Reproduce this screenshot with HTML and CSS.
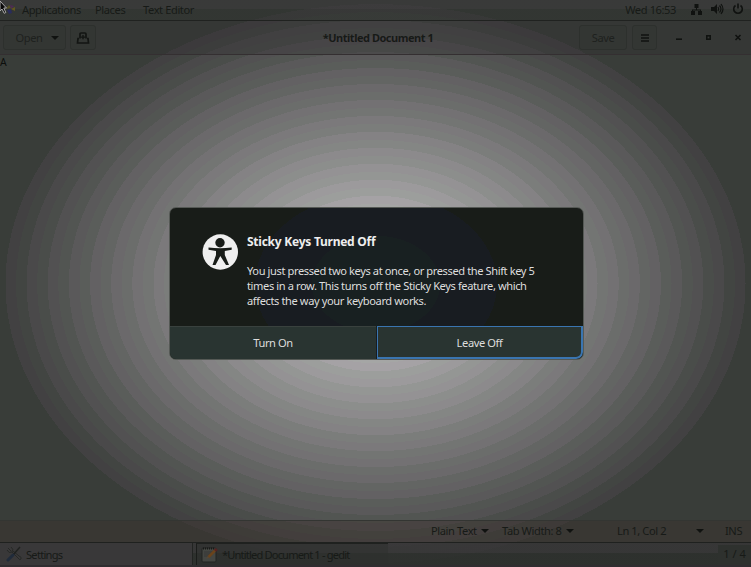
FILE: index.html
```html
<!DOCTYPE html>
<html lang="en">
<head>
<meta charset="utf-8">
<title>gedit</title>
<link rel="stylesheet" href="styles.css">
</head>
<body>
<div class="desktop">
  <header class="panel">
    <svg class="distro" width="10" height="10" viewBox="0 0 10 10"><path d="M0 5l3-4 2 3z" fill="#595424"/><path d="M4 1l4 1-3 3z" fill="#4f2b53"/><path d="M9 3v4L5 5z" fill="#61571f"/><path d="M1 6l4-1 1 4-3 1z" fill="#292c5c"/></svg>
    <span class="t apps">Applications</span>
    <span class="t places">Places</span>
    <span class="t editor">Text Editor</span>
    <span class="t clock">Wed 16:53</span>
    <svg class="tray" width="54" height="14" viewBox="0 0 54 14">
      <g fill="#101210"><rect x="4.500" y="2" width="4" height="4"/><rect x="1" y="9" width="4" height="4"/><rect x="8" y="9" width="4" height="4"/><path d="M6 5h1v2.500h4V10h-1V8.500H3V10H2V7.500h4z"/></g>
      <path d="M21 5h3l3-3v10l-3-3h-3z" fill="#101210"/>
      <path d="M28 5q1.500 2 0 4M29.500 3.500q3 3.500 0 7M31 2q4 5 0 10" fill="none" stroke="#101210" stroke-width="1.200"/>
      <path d="M45.500 3.500a4.300 4.300 0 1 0 5 0M48 1.500v5" fill="none" stroke="#101210" stroke-width="1.600"/>
    </svg>
  </header>
  <div class="titlebar">
    <div class="btn open"><span class="t">Open</span><i class="caret"></i></div>
    <div class="btn new"><svg width="14" height="12" viewBox="0 0 14 12"><path d="M4 6.500V2q0-1 1-1h4q1 0 1 1v4.500M3 6.500H2L1.500 11h11L12 6.500h-1" fill="none" stroke="#131513" stroke-width="1.700"/><path d="M6.300 3h1.400v1.400h1.400v1.400H7.700v1.500H6.300V5.800H4.900V4.400h1.400z" fill="#131513"/></svg></div>
    <div class="t title">*Untitled Document 1</div>
    <div class="btn save"><span class="t">Save</span></div>
    <div class="btn menu"><svg width="8" height="8" viewBox="0 0 8 8"><path d="M0 1h8M0 4h8M0 7h8" stroke="#101210" stroke-width="1.300"/></svg></div>
    <svg class="wm" width="70" height="8" viewBox="0 0 70 8"><path d="M1 5.200h6" stroke="#101210" stroke-width="1.600"/><rect x="31.800" y="1.800" width="3.400" height="3.400" fill="none" stroke="#101210" stroke-width="1.600"/><path d="M60.500 1l5 5M65.500 1l-5 5" stroke="#101210" stroke-width="1.600"/></svg>
  </div>
  <main class="text"><span class="t">A</span></main>
  <div class="status">
    <span class="t plain">Plain Text</span><i class="caret c1"></i>
    <span class="t tab">Tab Width: 8</span><i class="caret c2"></i>
    <span class="t pos">Ln 1, Col 2</span><i class="caret c3"></i>
    <span class="t ins">INS</span>
  </div>
  <footer class="tasks">
    <div class="task first">
      <svg width="16" height="16" viewBox="0 0 16 16"><path d="M2 2l3 3M5 1q3 2 1 5M1 4q2 4 5 2l6 6q2 3 3 1t-2-3L7 5" fill="none" stroke="#262826" stroke-width="1"/><path d="M14 1L7 9" stroke="#202220" stroke-width="1.500"/><path d="M7 9l-5 5" stroke="#202b3a" stroke-width="3" stroke-linecap="round"/></svg>
      <span class="t">Settings</span>
    </div>
    <div class="task active">
      <svg width="17" height="17" viewBox="0 0 17 17"><rect x="1" y="2" width="14" height="14" rx="1" fill="#444642" stroke="#232523"/><path d="M2 2.500h12" stroke="#171917" stroke-width="2" stroke-dasharray="1 1"/><path d="M3 6h9M3 8h7M3 10h5" stroke="#303230" stroke-width=".7"/><path d="M14 4.500l-6.500 6.500" stroke="#6b431b" stroke-width="2.500"/><path d="M15.800 3l-1.800 1.800" stroke="#572321" stroke-width="3"/><path d="M6.500 10l1.800 1.800-3 1.200z" fill="#544838"/></svg>
      <span class="t">*Untitled Document 1 - gedit</span>
    </div>
    <div class="pager"><span class="t">1 / 4</span></div>
  </footer>

  <section class="dialog">
    <div class="body">
      <svg class="icon" width="36" height="36" viewBox="0 0 36 36"><circle cx="18.300" cy="18" r="17.700" fill="#efefef"/><circle cx="18" cy="8.700" r="4.700" fill="#181c18"/><path d="M6.500 13.600Q18 15 29.700 13.600V15.700L22.800 17V21L27 31H24L18.300 22 13.500 31H10.500L14 21V17L6.500 15.700z" fill="#181c18"/></svg>
      <div class="copy">
        <h1 class="t">Sticky Keys Turned Off</h1>
        <div class="message">
          <div class="t">You just pressed two keys at once, or pressed the Shift key 5</div>
          <div class="t">times in a row. This turns off the Sticky Keys feature, which</div>
          <div class="t">affects the way your keyboard works.</div>
        </div>
      </div>
    </div>
    <div class="actions"><div class="act"><span class="t">Turn On</span></div><div class="act focus"><span class="t">Leave Off</span></div></div>
  </section>
  <svg class="pointer" width="8" height="14" viewBox="0 0 8 14"><path d="M0 0l6.500 7H3.800l2 4.500-1.600.8L2 8 0 10z" fill="#080808" stroke="#aaa" stroke-width="1"/></svg>
</div>
</body>
</html>
```
FILE: styles.css
```css
* { box-sizing: border-box; }
body { margin: 0; font-family: "Noto Sans", sans-serif; font-size: 11.100px; letter-spacing: -.4px; color: #171a17; }
.t { white-space: nowrap; }
svg { display: block; flex: none; }

.desktop {
  position: relative; width: 751px; height: 567px; overflow: hidden;
  display: flex; flex-direction: column;
  --s: calc(100% / 35);
  background: radial-gradient(ellipse 370px 279.300px at 375.500px 283.500px,
    #a5a6a5 0 calc(var(--s) * 10), #a5a2a5 0 calc(var(--s) * 11),
    #9c9e9c 0 calc(var(--s) * 12), #9c9a9c 0 calc(var(--s) * 13),
    #949694 0 calc(var(--s) * 14), #949294 0 calc(var(--s) * 15),
    #8c8e8c 0 calc(var(--s) * 16), #8c8a8c 0 calc(var(--s) * 17),
    #848684 0 calc(var(--s) * 18), #848284 0 calc(var(--s) * 19),
    #7b7d7b 0 calc(var(--s) * 20), #7b797b 0 calc(var(--s) * 21),
    #737573 0 calc(var(--s) * 22), #737173 0 calc(var(--s) * 23),
    #6b6d6b 0 calc(var(--s) * 24), #6b696b 0 calc(var(--s) * 25),
    #636563 0 calc(var(--s) * 26), #636163 0 calc(var(--s) * 27),
    #5a5d5a 0 calc(var(--s) * 28), #5a595a 0 calc(var(--s) * 29),
    #525552 0 calc(var(--s) * 30), #525152 0 calc(var(--s) * 31),
    #4a4d4a 0 calc(var(--s) * 32), #4a494a 0 calc(var(--s) * 33),
    #424542 0 calc(var(--s) * 34), #424142 0 100%, #393d39 0);
}

.panel { height: 21px; display: flex; align-items: center; padding: 0 7px 2px 6px; border-bottom: 1px solid #202220; background: linear-gradient(#393839a0 9px, #2a2d2a70 9px); }
.apps { margin-left: 6px; width: 73px; }
.places { width: 48px; }
.clock { margin-left: auto; margin-right: 14px; }

.titlebar { height: 34px; display: flex; align-items: center; padding: 0 6px 0 3px; background: #2d2a2d4d; border-bottom: 1px solid #342f31; }
.btn { height: 25px; border: 1px solid #2d302d; border-radius: 3px; background: #333633b0; display: flex; align-items: center; justify-content: center; color: #1e211e; }
.btn .t { margin-top: -1px; }
.open { width: 63px; gap: 8px; padding-left: 5px; letter-spacing: -.4px; }
.new { width: 26px; margin-left: 4px; }
.title { flex: 1; text-align: center; font-weight: 700; padding: 0 0 1px 81px; font-size: 11px; letter-spacing: -.48px; }
.save { width: 48px; margin-right: 5px; }
.menu { width: 25px; }
.wm { margin-left: 18px; }
.caret { width: 0; height: 0; border: 4px solid transparent; border-top-color: #101210; border-bottom: 0; flex: none; }

.text { flex: 1; font-size: 10.500px; line-height: 15px; color: #0c0e0c; }

.status { height: 23px; display: flex; align-items: center; padding: 0 0 2px 431px; background: #39302a66; border-top: 1px solid #333532; border-bottom: 1px solid #1f211f; }
.plain { width: 50px; } .tab { width: 64px; } .pos { width: 79px; }
.c1 { margin-right: 13px; } .c2 { margin-right: 43px; } .c3 { margin-right: 21px; }

.tasks { height: 24px; display: flex; background: linear-gradient(#363536d0 10px, #2c2f2ce0 10px); border-bottom: 2px solid #302d30; }
.task { display: flex; align-items: center; gap: 4px; letter-spacing: -.72px; }
.first { width: 193px; padding-left: 6px; background: #393839; border-right: 1px solid #222422; }
.active { width: 192px; margin-left: 3px; padding-left: 4px; background: #2d302d80; border-left: 1px solid #1b1d1b; border-top: 1px solid #1f211f; letter-spacing: -.83px; }
.pager { margin-left: auto; width: 33px; background: #2e312e; display: flex; align-items: center; justify-content: center; padding: 0 0 4px; margin-top: 2px; letter-spacing: 0; }

.dialog {
  position: absolute; left: 169px; top: 207px; width: 415px; height: 153px;
  border: 1px solid #555955; border-radius: 7px; overflow: hidden; display: flex; flex-direction: column;
  background: radial-gradient(ellipse 121px 91px at 206px 76px, #182021 0 53%, #181c21 0 100%, #181c18 0);
  color: #dedede;
}
.body { flex: 1; display: flex; gap: 9px; padding: 26px 0 0 32px; }
.copy { padding-top: 1px; }
.dialog h1 { margin: 0; font-size: 12px; line-height: 14px; font-weight: 700; letter-spacing: -.25px; color: #eee; }
.message { margin-top: 14px; line-height: 15px; }
.actions { height: 33px; display: flex; }
.act { flex: 1; background: #293431; border-top: 1px solid #39413e; display: flex; align-items: center; justify-content: center; padding-bottom: 2px; }
.focus { flex: 0 0 206px; border: 1px solid #3a75b0; border-width: 1px 2px 2px 1px; border-radius: 0 0 7px 0; margin-left: 1px; padding-bottom: 0; }
.pointer { position: absolute; left: 0; top: 1px; }
```
